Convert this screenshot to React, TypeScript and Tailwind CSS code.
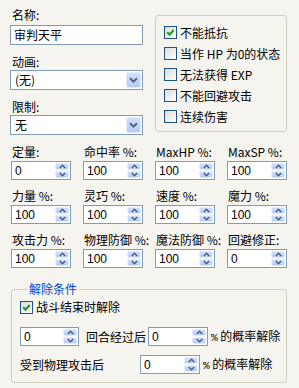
const ui = "font-['Noto_Sans_CJK_SC',sans-serif] text-[12px] leading-[14px]"
const num = "font-['Liberation_Sans',sans-serif] text-[12px]"

const UpArrow = () => (
    <svg width="7" height="5" viewBox="0 0 7 5">
        <path d="M0.8 4 L3.5 1.3 L6.2 4" fill="none" stroke="#4D6185" strokeWidth="1.6" />
    </svg>
)

const DownArrow = () => (
    <svg width="7" height="5" viewBox="0 0 7 5">
        <path d="M0.8 1 L3.5 3.7 L6.2 1" fill="none" stroke="#4D6185" strokeWidth="1.6" />
    </svg>
)

const Spin = ({ value, w }: { value: string; w: string }) => (
    <div className={`${w} h-[19px] border border-[#7F9DB9] bg-white flex`}>
        <div className={`flex-1 pl-[3px] flex items-center ${num}`}>{value}</div>
        <div className="w-[16px] flex flex-col p-[1px] gap-[1px]">
            <div className="flex-1 rounded-[2px] border border-[#E3EBFD] bg-gradient-to-b from-[#D3E0FD] to-[#B4CBF7] flex items-center justify-center">
                <UpArrow />
            </div>
            <div className="flex-1 rounded-[2px] border border-[#E3EBFD] bg-gradient-to-b from-[#D3E0FD] to-[#B4CBF7] flex items-center justify-center">
                <DownArrow />
            </div>
        </div>
    </div>
)

const Select = ({ value }: { value: string }) => (
    <div className="mt-[1px] h-[20px] border border-[#7F9DB9] bg-white flex">
        <div className="flex-1 pl-[4px] flex items-center">{value}</div>
        <div className="w-[17px] p-[1px] flex">
            <div className="flex-1 rounded-[2px] border border-[#E3EBFD] bg-gradient-to-b from-[#D3E0FD] to-[#B4CBF7] flex items-center justify-center">
                <svg width="9" height="6" viewBox="0 0 9 6">
                    <path d="M1 1.2 L4.5 4.6 L8 1.2" fill="none" stroke="#4D6185" strokeWidth="2" />
                </svg>
            </div>
        </div>
    </div>
)

const Check = ({ checked }: { checked?: boolean }) => (
    <div className="w-[13px] h-[13px] border border-[#1C5180] bg-gradient-to-br from-[#DCDCD7] to-white flex items-center justify-center shrink-0">
        {checked && (
            <svg width="9" height="9" viewBox="0 0 9 9">
                <path d="M1.2 4.2 L3.6 6.6 L7.8 2" fill="none" stroke="#21A121" strokeWidth="2.2" />
            </svg>
        )}
    </div>
)

// half-width percent sign, like the dialog's bitmap font
const Pct = () => <span className="font-['Liberation_Mono',monospace] text-[11px]">%</span>

const flags = [
    { label: "不能抵抗", checked: true },
    { label: "当作 HP 为0的状态" },
    { label: "无法获得 EXP" },
    { label: "不能回避攻击" },
    { label: "连续伤害" },
]

const fields = [
    { label: "定量:", value: "0" },
    { label: "命中率 %:", value: "100" },
    { label: "MaxHP %:", value: "100" },
    { label: "MaxSP %:", value: "100" },
    { label: "力量 %:", value: "100" },
    { label: "灵巧 %:", value: "100" },
    { label: "速度 %:", value: "100" },
    { label: "魔力 %:", value: "100" },
    { label: "攻击力 %:", value: "100" },
    { label: "物理防御 %:", value: "100" },
    { label: "魔法防御 %:", value: "100" },
    { label: "回避修正:", value: "0" },
]

export default function App() {
    return (
        <div className={`w-[299px] h-[388px] bg-[#f5f4ef] text-black overflow-hidden ${ui}`}>
            <div className="flex pl-[10px] pt-[8px]">
                <div className="w-[133px] flex flex-col">
                    <div className="pl-[2px]">名称:</div>
                    <div className="mt-[3px] h-[20px] border border-[#7F9DB9] bg-white pl-[3px] flex items-center">
                        审判天平
                    </div>
                    <div className="mt-[10px] pl-[2px]">动画:</div>
                    <Select value="(无)" />
                    <div className="mt-[10px] pl-[2px]">限制:</div>
                    <Select value="无" />
                </div>
                <div className="ml-[12px] mt-[7px] w-[132px] h-[117px] border border-[#D0D0BF] rounded-[3px] pl-[8px] pt-[6px]">
                    {flags.map((f) => (
                        <div key={f.label} className="h-[21px] flex items-center gap-[3px]">
                            <Check checked={f.checked} />
                            <span>{f.label}</span>
                        </div>
                    ))}
                </div>
            </div>

            <div className="mt-[10px] pl-[11px] grid grid-cols-[60px_60px_60px_60px] gap-x-[12px] gap-y-[9px]">
                {fields.map((f) => (
                    <div key={f.label} className="flex flex-col">
                        <div className="whitespace-nowrap pl-[1px]">{f.label}</div>
                        <div className="mt-[2px]">
                            <Spin value={f.value} w="w-[60px]" />
                        </div>
                    </div>
                ))}
            </div>

            <fieldset className="mt-[14px] ml-[11px] w-[276px] border border-[#D0D0BF] rounded-[3px] pl-[8px] pb-[8px]">
                <legend className="ml-[7px] px-[2px] text-[#0046D5]">解除条件</legend>
                <div className="pt-[2px] h-[20px] flex items-center gap-[3px]">
                    <Check checked />
                    <span>战斗结束时解除</span>
                </div>
                <div className="mt-[11px] flex items-center">
                    <Spin value="0" w="w-[59px]" />
                    <span className="ml-[7px] mr-[2px]">回合经过后</span>
                    <Spin value="0" w="w-[60px]" />
                    <span className="ml-[3px]"><Pct /> 的概率解除</span>
                </div>
                <div className="mt-[9px] flex items-center">
                    <span className="w-[120px]">受到物理攻击后</span>
                    <Spin value="0" w="w-[60px]" />
                    <span className="ml-[3px]"><Pct /> 的概率解除</span>
                </div>
            </fieldset>
        </div>
    )
}
